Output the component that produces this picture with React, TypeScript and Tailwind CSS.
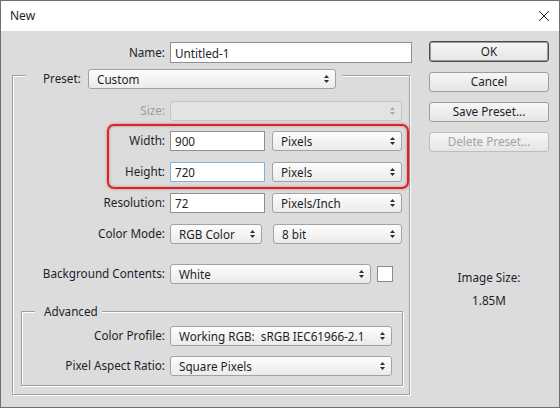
import clsx from "clsx"

const labelText = "text-right text-[#1e1e2a]"

function Arrows({ muted }: { muted?: boolean }) {
  return (
    <svg width="7" height="10" viewBox="0 0 7 10" className={muted ? "fill-[#a9a9a9]" : "fill-[#2c2c2c]"}>
      <path d="M3.5 1 L6 4 H1 Z" />
      <path d="M3.5 9 L6 6 H1 Z" />
    </svg>
  )
}

function Select({ value, className, disabled }: { value?: string; className?: string; disabled?: boolean }) {
  return (
    <div
      className={clsx(
        "flex h-[20px] items-center justify-between rounded-[3px] border pl-[8px] pr-[5px]",
        disabled
          ? "border-[#c4c4c4] bg-[#e3e3e3]"
          : "border-[#a2a2a2] bg-linear-to-b from-[#fdfdfd] to-[#ebebeb]",
        className
      )}
    >
      <span className="overflow-hidden whitespace-pre leading-[18px]">{value}</span>
      <Arrows muted={disabled} />
    </div>
  )
}

function Field({ value, className, focused }: { value: string; className?: string; focused?: boolean }) {
  return (
    <div
      className={clsx(
        "flex h-[20px] items-center border bg-white pl-[4px] leading-[18px]",
        focused ? "border-[#7eb1e4]" : "border-[#8f8f8f]",
        className
      )}
    >
      {value}
    </div>
  )
}

function Button({ children, primary, disabled }: { children: React.ReactNode; primary?: boolean; disabled?: boolean }) {
  return (
    <div
      className={clsx(
        "flex items-center justify-center rounded-[3px] border bg-linear-to-b from-[#f7f7f7] to-[#e5e5e5]",
        primary
          ? "h-[21px] border-[#4d4d4d] shadow-[inset_0_0_0_1px_#9a9a9a]"
          : "h-[20px]",
        !primary && (disabled ? "border-[#bdbdbd] text-[#a3a3a3]" : "border-[#9d9d9d]")
      )}
    >
      {children}
    </div>
  )
}

function Row({ label, labelW, className, children, muted }: { label: string; labelW: string; className?: string; children: React.ReactNode; muted?: boolean }) {
  return (
    <div className={clsx("flex h-[20px] items-center", className)}>
      <div className={clsx(labelText, labelW, "mr-[5px]", muted && "text-[#9b9b9b]")}>{label}</div>
      {children}
    </div>
  )
}

export default function App() {
  return (
    <div className="flex h-[408px] w-[560px] flex-col border border-[#6f6f6f] bg-[#dcdcdc] font-['Noto_Sans',sans-serif] text-[11.7px] text-[#1e1e2a]">
      {/* title bar */}
      <div className="flex h-[30px] items-center justify-between bg-white pl-[9px] pr-[10px]">
        <span className="text-[12px] leading-[16px]">New</span>
        <svg width="10" height="10" viewBox="0 0 10 10" className="stroke-[#222]">
          <path d="M0 0 L10 10 M10 0 L0 10" strokeWidth="1" />
        </svg>
      </div>

      <div className="flex flex-1 items-start pl-[11px] pt-[10px]">
        {/* left column */}
        <div className="flex w-[400px] flex-col">
          <div className="mt-[1px] flex h-[21px] items-center">
            <div className={clsx(labelText, "mr-[5px] w-[153px]")}>Name:</div>
            <Field value="Untitled-1" className="h-[21px] w-[242px]" />
          </div>

          {/* preset group */}
          <div className="mt-[12px] flex w-[398px] flex-col border border-[#a0a0a0] pb-[8px] shadow-[inset_1px_1px_0_#fff,1px_1px_0_#fff]">
            <div className="-mt-[7px] ml-[13px] flex h-[20px] w-[316px] items-center bg-[#dcdcdc] pl-[17px] pr-[6px]">
              <span className="w-[45px]">Preset:</span>
              <Select value="Custom" className="w-[248px]" />
            </div>

            <Row label="Size:" labelW="w-[152px]" className="mt-[12px]" muted>
              <Select disabled className="w-[232px]" />
            </Row>

            <div className="relative mt-[10px] flex flex-col">
              <Row label="Width:" labelW="w-[152px]">
                <Field value="900" className="w-[95px]" />
                <Select value="Pixels" className="ml-[7px] w-[130px]" />
              </Row>
              <Row label="Height:" labelW="w-[152px]" className="mt-[11px]">
                <Field value="720" focused className="w-[95px]" />
                <Select value="Pixels" className="ml-[7px] w-[130px]" />
              </Row>
              <div className="pointer-events-none absolute -bottom-[7px] -top-[7px] left-[94px] right-0 rounded-[7px] border-2 border-[#ec1c24] shadow-[0_0_3px_rgba(0,0,0,0.35),inset_0_0_3px_rgba(0,0,0,0.3)]" />
            </div>

            <Row label="Resolution:" labelW="w-[152px]" className="mt-[11px]">
              <Field value="72" className="w-[95px]" />
              <Select value="Pixels/Inch" className="ml-[7px] w-[130px]" />
            </Row>

            <Row label="Color Mode:" labelW="w-[152px]" className="mt-[11px]">
              <Select value="RGB Color" className="w-[92px]" />
              <Select value="8 bit" className="ml-[11px] w-[129px]" />
            </Row>

            <Row label="Background Contents:" labelW="w-[152px]" className="mt-[20px]">
              <Select value="White" className="w-[201px]" />
              <div className="ml-[6px] h-[16px] w-[16px] border border-[#8c8c8c] bg-white" />
            </Row>

            {/* advanced group */}
            <div className="ml-[8px] mt-[27px] flex w-[382px] flex-col border border-[#a0a0a0] pb-[9px] shadow-[inset_1px_1px_0_#fff,1px_1px_0_#fff]">
              <div className="-mt-[9px] ml-[13px] h-[16px] self-start bg-[#dcdcdc] pl-[9px] pr-[4px] leading-[16px]">
                Advanced
              </div>
              <Row label="Color Profile:" labelW="w-[143px]" className="mt-[7px]">
                <Select value="Working RGB:  sRGB IEC61966-2.1" className="w-[222px]" />
              </Row>
              <Row label="Pixel Aspect Ratio:" labelW="w-[143px]" className="mt-[10px]">
                <Select value="Square Pixels" className="w-[222px]" />
              </Row>
            </div>
          </div>
        </div>

        {/* right column */}
        <div className="ml-[17px] flex w-[120px] flex-col text-center">
          <Button primary>OK</Button>
          <div className="mt-[10px]">
            <Button>Cancel</Button>
          </div>
          <div className="mt-[10px]">
            <Button>Save Preset...</Button>
          </div>
          <div className="mt-[10px]">
            <Button disabled>Delete Preset...</Button>
          </div>
          <div className="mt-[117px] leading-[16px]">Image Size:</div>
          <div className="mt-[7px] leading-[16px]">1.85M</div>
        </div>
      </div>
    </div>
  )
}
